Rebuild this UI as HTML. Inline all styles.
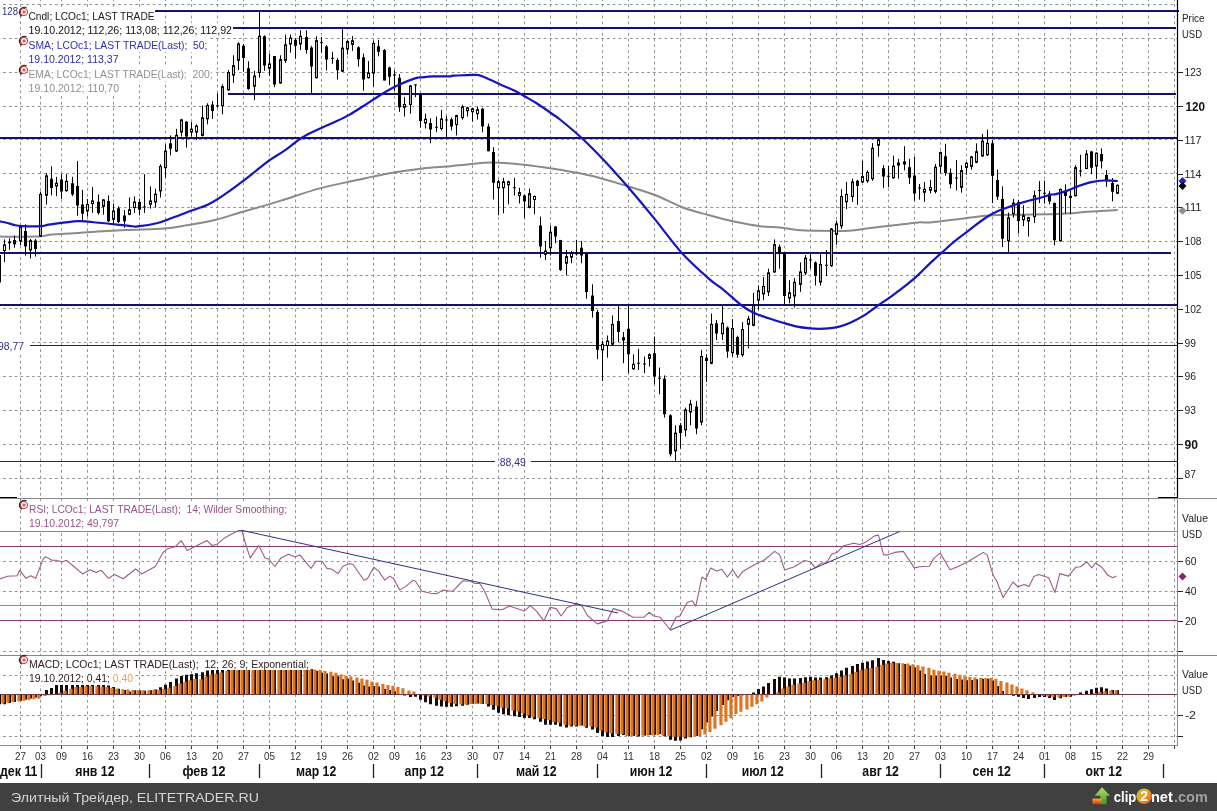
<!DOCTYPE html>
<html><head><meta charset="utf-8"><style>html,body{margin:0;padding:0;background:#fff;overflow:hidden}svg{display:block;will-change:transform}</style></head>
<body><svg width="1217" height="811" viewBox="0 0 1217 811"><rect width="1217" height="811" fill="#fff"/><path d="M20.5 0V745 M40.5 0V745 M61.5 0V745 M87.5 0V745 M113.5 0V745 M139.5 0V745 M165.5 0V745 M191.5 0V745 M217.5 0V745 M243.5 0V745 M269.5 0V745 M295.5 0V745 M321.5 0V745 M347.5 0V745 M373.5 0V745 M394.5 0V745 M420.5 0V745 M446.5 0V745 M472.5 0V745 M498.5 0V745 M524.5 0V745 M550.5 0V745 M576.5 0V745 M602.5 0V745 M628.5 0V745 M654.5 0V745 M680.5 0V745 M706.5 0V745 M732.5 0V745 M758.5 0V745 M784.5 0V745 M810.5 0V745 M836.5 0V745 M862.5 0V745 M888.5 0V745 M914.5 0V745 M940.5 0V745 M966.5 0V745 M992.5 0V745 M1018.5 0V745 M1044.5 0V745 M1070.5 0V745 M1096.5 0V745 M1122.5 0V745 M1148.5 0V745 M1174.5 0V745" stroke="#929292" stroke-width="1" stroke-dasharray="2.75 3" stroke-dashoffset="1.6" fill="none"/>
<path d="M0 4.5H1177 M0 38.5H1177 M0 72.5H1177 M0 106.5H1177 M0 139.5H1177 M0 173.5H1177 M0 207.5H1177 M0 241.5H1177 M0 275.5H1177 M0 308.5H1177 M0 342.5H1177 M0 376.5H1177 M0 410.5H1177 M0 444.5H1177 M0 478.5H1177 M0 561.5H1177 M0 591.5H1177 M0 651.5H1177 M0 675.5H1177 M0 715.5H1177 M0 736.5H1177" stroke="#929292" stroke-width="1" stroke-dasharray="2.75 3" stroke-dashoffset="2.55" fill="none"/>
<path d="M155 11H1179 M233 28H1176 M228 94H1176 M0 138H1177 M0 253H1171 M0 305H1177" stroke="#12126e" stroke-width="2" fill="none"/>
<path d="M30 345.5H1177 M0 461.5H495 M531 461.5H1177" stroke="#202070" stroke-width="1" fill="none"/>
<path d="M-2.0 236.6 C4.5 236.6 28.0 236.9 37.0 236.6 C46.0 236.2 45.6 235.1 51.8 234.5 C58.0 233.9 66.3 233.7 74.0 233.2 C81.7 232.7 88.8 231.9 98.0 231.4 C107.2 230.9 118.4 230.4 129.4 229.9 C140.5 229.4 154.8 229.3 164.3 228.5 C173.8 227.7 178.1 226.7 186.5 225.3 C194.9 223.9 206.1 222.1 215.0 220.0 C223.9 217.9 230.9 215.2 240.0 212.5 C249.1 209.8 262.2 206.3 269.6 204.1 C277.0 201.9 276.3 202.1 284.5 199.5 C292.7 196.9 307.5 191.7 319.0 188.6 C330.5 185.5 342.0 183.3 353.5 180.8 C365.0 178.3 376.5 175.6 388.0 173.5 C399.5 171.4 412.3 169.6 422.6 168.4 C432.9 167.2 442.6 167.0 450.0 166.3 C457.4 165.6 460.2 165.0 467.1 164.4 C474.0 163.8 482.4 162.5 491.5 162.5 C500.6 162.5 511.9 163.5 521.4 164.4 C530.9 165.3 542.1 167.1 548.5 168.0 C554.9 168.9 552.6 168.5 560.0 169.8 C567.4 171.1 581.3 173.2 592.6 176.0 C603.9 178.8 617.4 183.1 627.8 186.3 C638.2 189.5 646.0 191.5 655.0 195.0 C664.0 198.5 673.1 203.8 682.1 207.2 C691.1 210.6 700.2 212.8 709.3 215.3 C718.3 217.8 727.9 220.3 736.4 222.1 C744.9 223.9 752.7 225.3 760.0 226.2 C767.3 227.1 773.8 227.0 780.0 227.6 C786.2 228.2 791.5 229.4 797.3 229.9 C803.0 230.4 805.9 230.6 814.5 230.7 C823.1 230.8 840.4 231.1 849.0 230.7 C857.6 230.3 859.1 229.4 866.3 228.5 C873.5 227.6 883.6 226.5 892.2 225.5 C900.8 224.5 911.8 222.9 918.1 222.4 C924.4 221.9 923.1 223.0 930.0 222.4 C936.9 221.8 949.7 220.2 959.6 219.0 C969.5 217.8 979.3 216.2 989.2 215.5 C999.1 214.8 1008.7 214.9 1018.8 214.7 C1028.9 214.5 1041.1 214.4 1050.0 214.2 C1058.9 214.0 1065.7 213.7 1072.0 213.3 C1078.3 212.9 1080.4 212.2 1088.0 211.7 C1095.6 211.2 1112.8 210.4 1117.7 210.1" stroke="#8a8a8a" stroke-width="2" fill="none"/>
<path d="M-0.5 250.0V288.0 M4.5 239.4V262.1 M9.5 238.3V249.9 M14.5 235.5V247.7 M20.5 224.9V245.2 M25.5 224.4V255.5 M30.5 239.0V258.5 M35.5 239.0V256.5 M40.5 191.6V236.9 M46.5 173.1V204.5 M51.5 166.3V195.3 M56.5 176.8V196.2 M61.5 174.0V199.0 M66.5 174.0V191.6 M72.5 176.8V196.2 M77.5 161.1V215.6 M82.5 189.8V221.2 M87.5 199.0V216.6 M92.5 187.0V212.9 M98.5 194.4V214.7 M103.5 199.0V214.7 M108.5 195.3V222.1 M113.5 203.6V224.0 M118.5 206.4V223.0 M124.5 210.1V227.7 M129.5 197.5V215.3 M134.5 196.4V213.0 M139.5 198.6V215.3 M144.5 174.2V213.0 M150.5 186.4V208.6 M155.5 188.7V207.5 M160.5 164.3V197.5 M165.5 144.3V177.6 M170.5 135.4V155.4 M176.5 128.8V152.1 M181.5 118.8V136.5 M186.5 121.0V147.6 M191.5 122.1V136.5 M196.5 124.3V139.9 M202.5 105.5V136.5 M207.5 103.3V124.3 M212.5 101.0V118.8 M217.5 93.3V107.7 M222.5 84.4V114.3 M228.5 69.9V90.7 M233.5 55.3V82.9 M238.5 42.3V70.0 M243.5 44.0V71.7 M248.5 61.3V89.8 M254.5 70.8V100.2 M259.5 11.2V77.7 M264.5 35.4V70.8 M269.5 53.5V76.0 M274.5 56.1V87.2 M280.5 55.3V83.8 M285.5 34.5V63.0 M290.5 34.5V52.7 M295.5 38.0V58.7 M300.5 30.2V50.1 M306.5 30.2V53.5 M311.5 45.8V94.1 M316.5 36.3V78.6 M321.5 37.1V52.7 M326.5 45.1V70.5 M332.5 51.8V63.8 M337.5 58.2V79.5 M342.5 26.8V72.1 M347.5 39.8V54.5 M352.5 36.1V50.9 M358.5 46.2V66.6 M363.5 53.6V90.6 M368.5 61.0V78.6 M373.5 40.7V86.9 M378.5 39.8V56.4 M384.5 49.0V80.4 M389.5 66.6V85.1 M394.5 70.3V90.6 M399.5 74.0V111.9 M404.5 97.1V116.5 M410.5 85.1V113.7 M415.5 84.1V97.1 M420.5 93.4V127.6 M425.5 113.7V128.5 M430.5 118.3V143.3 M436.5 116.5V132.2 M441.5 109.8V130.4 M446.5 116.0V137.5 M451.5 117.6V130.4 M456.5 114.7V135.4 M462.5 104.8V119.6 M467.5 106.8V116.6 M472.5 107.8V121.6 M477.5 106.8V119.6 M482.5 107.8V132.4 M488.5 123.5V151.2 M493.5 147.2V199.5 M498.5 179.8V215.3 M503.5 177.8V213.3 M508.5 180.7V204.4 M514.5 177.8V195.5 M519.5 187.7V203.4 M524.5 194.6V218.2 M529.5 188.6V208.4 M534.5 195.5V214.3 M540.5 216.6V257.7 M545.5 241.0V259.9 M550.5 225.5V255.5 M555.5 226.2V243.3 M560.5 239.9V271.0 M566.5 249.9V275.4 M571.5 251.0V263.2 M576.5 239.9V255.5 M581.5 241.0V263.2 M586.5 253.2V298.7 M592.5 284.3V317.6 M597.5 309.9V359.2 M602.5 341.0V381.0 M607.5 335.5V357.7 M612.5 315.5V345.5 M618.5 304.4V342.1 M623.5 332.1V363.2 M628.5 305.5V373.2 M633.5 354.3V369.9 M638.5 348.8V369.9 M644.5 356.5V373.2 M649.5 353.2V366.5 M654.5 336.6V384.3 M659.5 367.6V394.3 M664.5 375.4V417.5 M670.5 414.2V456.4 M675.5 425.3V460.8 M680.5 423.1V448.6 M685.5 407.6V436.4 M690.5 399.8V425.3 M696.5 400.9V434.2 M701.5 349.9V425.3 M706.5 354.3V382.0 M711.5 313.5V364.3 M716.5 320.0V340.0 M722.5 305.4V340.0 M727.5 326.4V357.8 M732.5 319.0V356.8 M737.5 335.8V357.8 M742.5 322.2V356.8 M748.5 315.9V348.4 M753.5 292.8V326.4 M758.5 285.5V309.6 M763.5 277.1V300.2 M768.5 268.7V296.0 M774.5 239.4V272.9 M779.5 244.6V268.7 M784.5 251.9V304.4 M789.5 280.2V303.3 M794.5 278.1V307.5 M800.5 262.4V291.8 M805.5 255.1V275.0 M810.5 253.0V268.7 M815.5 261.4V285.5 M820.5 254.0V285.5 M826.5 250.0V276.1 M831.5 228.0V266.8 M836.5 220.6V244.8 M841.5 189.2V229.0 M846.5 181.9V209.1 M852.5 178.7V201.8 M857.5 179.8V204.9 M862.5 160.9V182.9 M867.5 170.3V182.9 M872.5 143.1V180.8 M878.5 137.8V156.7 M883.5 165.1V188.1 M888.5 166.1V187.1 M893.5 155.6V178.7 M898.5 158.8V178.7 M904.5 146.2V170.3 M909.5 158.8V184.0 M914.5 156.7V200.7 M919.5 184.0V199.7 M924.5 181.9V201.8 M930.5 179.8V193.4 M935.5 164.0V193.4 M940.5 151.5V173.5 M945.5 143.7V175.7 M950.5 168.5V188.4 M956.5 160.1V190.5 M961.5 165.3V192.6 M966.5 162.2V174.8 M971.5 155.9V169.5 M976.5 143.3V163.2 M982.5 133.9V156.9 M987.5 129.7V155.9 M992.5 140.2V203.1 M997.5 169.5V199.9 M1002.5 186.3V247.1 M1008.5 212.5V252.3 M1013.5 198.9V217.7 M1018.5 199.9V233.5 M1023.5 205.2V226.1 M1028.5 216.7V236.6 M1034.5 190.5V223.0 M1039.5 181.0V203.1 M1044.5 180.5V203.7 M1049.5 191.0V204.3 M1054.5 202.5V245.2 M1060.5 188.5V241.6 M1065.5 184.3V213.4 M1070.5 190.9V214.1 M1075.5 165.3V196.5 M1080.5 154.8V176.5 M1086.5 150.0V169.3 M1091.5 150.8V174.1 M1096.5 152.4V178.9 M1101.5 148.4V168.5 M1106.5 170.1V186.9 M1112.5 178.1V201.3 M1117.5 184.5V194.1" stroke="#000" stroke-width="1" fill="none"/>
<path d="M-2 254.9h3v27.7h-3z M8 241.6h3v1.7h-3z M13 240.0h3v4.3h-3z M24 231.0h3v15.4h-3z M34 240.6h3v8.3h-3z M50 178.7h3v9.2h-3z M60 179.6h3v12.0h-3z M71 183.3h3v11.1h-3z M76 186.0h3v19.5h-3z M81 204.5h3v9.3h-3z M97 201.8h3v11.1h-3z M107 200.9h3v20.3h-3z M117 208.2h3v13.9h-3z M123 215.6h3v5.6h-3z M138 202.0h3v7.7h-3z M143 206.4h3v1h-3z M169 143.2h3v5.5h-3z M185 121.7h3v14.8h-3z M211 104.4h3v6.6h-3z M216 105.2h3v1h-3z M242 45.8h3v12.1h-3z M247 68.2h3v20.7h-3z M263 36.3h3v29.3h-3z M273 56.1h3v28.5h-3z M294 39.7h3v6.1h-3z M305 37.1h3v13.0h-3z M310 47.5h3v19.0h-3z M320 42.2h3v1h-3z M325 46.4h3v13.0h-3z M331 57.7h3v1h-3z M336 60.1h3v10.2h-3z M357 47.2h3v12.0h-3z M362 57.3h3v22.2h-3z M377 46.2h3v5.6h-3z M383 49.9h3v30.5h-3z M388 67.5h3v9.2h-3z M393 74.4h3v1h-3z M398 77.7h3v29.5h-3z M414 84.6h3v1h-3z M419 94.3h3v26.8h-3z M429 123.0h3v6.4h-3z M435 126.7h3v1h-3z M445 119.5h3v1h-3z M450 119.2h3v7.3h-3z M481 108.7h3v17.8h-3z M487 126.5h3v24.7h-3z M492 152.1h3v30.6h-3z M513 187.2h3v1h-3z M523 195.5h3v6.0h-3z M539 225.5h3v21.1h-3z M554 226.6h3v10.0h-3z M559 239.9h3v30.0h-3z M575 252.1h3v2.2h-3z M580 247.7h3v7.8h-3z M585 253.2h3v38.9h-3z M591 295.4h3v15.5h-3z M596 312.1h3v37.7h-3z M617 321.0h3v11.1h-3z M627 328.8h3v25.5h-3z M637 362.7h3v1h-3z M643 363.4h3v1h-3z M653 353.2h3v23.3h-3z M658 377.8h3v1h-3z M663 378.7h3v35.5h-3z M669 415.3h3v38.9h-3z M679 425.3h3v7.8h-3z M695 406.5h3v22.1h-3z M705 357.7h3v3.3h-3z M715 323.3h3v10.2h-3z M726 327.4h3v24.1h-3z M736 336.9h3v17.8h-3z M778 246.7h3v7.3h-3z M783 253.0h3v43.0h-3z M809 259.4h3v1h-3z M814 262.4h3v13.7h-3z M825 264.8h3v1h-3z M856 180.8h3v5.2h-3z M882 168.2h3v8.4h-3z M887 175.7h3v1h-3z M908 167.2h3v10.5h-3z M913 175.6h3v17.8h-3z M918 187.6h3v1h-3z M944 156.3h3v16.7h-3z M949 172.7h3v11.5h-3z M955 177.4h3v1h-3z M991 143.3h3v32.5h-3z M996 180.0h3v16.8h-3z M1001 198.9h3v39.8h-3z M1017 202.0h3v18.9h-3z M1038 190.0h3v1h-3z M1043 192.8h3v1h-3z M1048 193.4h3v8.1h-3z M1053 203.0h3v37.3h-3z M1064 191.2h3v4.9h-3z M1069 195.7h3v2.4h-3z M1079 170.4h3v1h-3z M1090 151.6h3v16.1h-3z M1100 154.0h3v7.3h-3z M1105 174.9h3v6.4h-3z M1111 182.9h3v8.8h-3z" fill="#000"/>
<g fill="#fff" stroke="#000" stroke-width="1"><rect x="3.5" y="244.9" width="2" height="5.6" fill="#fff"/><rect x="19.5" y="227.0" width="2" height="14.0" fill="#b4b4b4"/><rect x="29.5" y="240.6" width="2" height="9.4" fill="#d4d4d4"/><rect x="39.5" y="194.4" width="2" height="41.6" fill="#b4b4b4"/><rect x="45.5" y="175.9" width="2" height="19.4" fill="#b4b4b4"/><rect x="55.5" y="183.3" width="2" height="2.7" fill="#fff"/><rect x="65.5" y="181.4" width="2" height="9.3" fill="#d4d4d4"/><rect x="86.5" y="204.5" width="2" height="6.5" fill="#d4d4d4"/><rect x="91.5" y="200.9" width="2" height="2.7" fill="#fff"/><rect x="102.5" y="199.9" width="2" height="6.5" fill="#d4d4d4"/><rect x="112.5" y="211.0" width="2" height="8.3" fill="#d4d4d4"/><rect x="128.5" y="209.7" width="2" height="4.5" fill="#fff"/><rect x="133.5" y="202.0" width="2" height="5.5" fill="#fff"/><rect x="149.5" y="200.9" width="2" height="3.3" fill="#fff"/><rect x="154.5" y="194.2" width="2" height="7.8" fill="#d4d4d4"/><rect x="159.5" y="166.5" width="2" height="24.4" fill="#b4b4b4"/><rect x="164.5" y="151.0" width="2" height="16.6" fill="#b4b4b4"/><rect x="175.5" y="135.4" width="2" height="15.6" fill="#b4b4b4"/><rect x="180.5" y="119.9" width="2" height="12.2" fill="#b4b4b4"/><rect x="190.5" y="129.2" width="2" height="2.9" fill="#fff"/><rect x="195.5" y="126.1" width="2" height="6.0" fill="#fff"/><rect x="201.5" y="117.7" width="2" height="17.7" fill="#b4b4b4"/><rect x="206.5" y="105.5" width="2" height="13.3" fill="#b4b4b4"/><rect x="221.5" y="86.6" width="2" height="18.9" fill="#b4b4b4"/><rect x="227.5" y="72.5" width="2" height="17.3" fill="#b4b4b4"/><rect x="232.5" y="65.6" width="2" height="9.5" fill="#d4d4d4"/><rect x="237.5" y="44.0" width="2" height="16.4" fill="#b4b4b4"/><rect x="253.5" y="76.0" width="2" height="10.4" fill="#d4d4d4"/><rect x="258.5" y="36.3" width="2" height="36.2" fill="#b4b4b4"/><rect x="268.5" y="63.9" width="2" height="4.3" fill="#fff"/><rect x="279.5" y="59.6" width="2" height="23.3" fill="#b4b4b4"/><rect x="284.5" y="44.9" width="2" height="15.5" fill="#b4b4b4"/><rect x="289.5" y="38.0" width="2" height="6.0" fill="#fff"/><rect x="299.5" y="36.3" width="2" height="7.7" fill="#d4d4d4"/><rect x="315.5" y="40.6" width="2" height="37.1" fill="#b4b4b4"/><rect x="341.5" y="48.1" width="2" height="23.1" fill="#b4b4b4"/><rect x="346.5" y="41.6" width="2" height="7.4" fill="#d4d4d4"/><rect x="351.5" y="40.7" width="2" height="3.7" fill="#fff"/><rect x="367.5" y="73.0" width="2" height="4.7" fill="#fff"/><rect x="372.5" y="43.5" width="2" height="29.5" fill="#b4b4b4"/><rect x="403.5" y="104.5" width="2" height="2.7" fill="#fff"/><rect x="409.5" y="86.0" width="2" height="18.5" fill="#b4b4b4"/><rect x="424.5" y="119.3" width="2" height="3.7" fill="#fff"/><rect x="440.5" y="119.0" width="2" height="9.5" fill="#d4d4d4"/><rect x="455.5" y="115.6" width="2" height="8.9" fill="#d4d4d4"/><rect x="461.5" y="106.8" width="2" height="10.8" fill="#d4d4d4"/><rect x="466.5" y="107.8" width="2" height="2.9" fill="#fff"/><rect x="471.5" y="108.7" width="2" height="3.0" fill="#fff"/><rect x="476.5" y="109.7" width="2" height="4.0" fill="#fff"/><rect x="497.5" y="181.7" width="2" height="6.0" fill="#fff"/><rect x="502.5" y="181.7" width="2" height="6.0" fill="#fff"/><rect x="507.5" y="181.7" width="2" height="3.0" fill="#fff"/><rect x="518.5" y="192.6" width="2" height="2.9" fill="#fff"/><rect x="528.5" y="193.6" width="2" height="13.8" fill="#b4b4b4"/><rect x="533.5" y="196.5" width="2" height="3.0" fill="#fff"/><rect x="544.5" y="251.0" width="2" height="3.3" fill="#fff"/><rect x="549.5" y="232.2" width="2" height="15.5" fill="#b4b4b4"/><rect x="565.5" y="256.6" width="2" height="6.6" fill="#d4d4d4"/><rect x="570.5" y="253.2" width="2" height="4.0" fill="#fff"/><rect x="601.5" y="344.3" width="2" height="5.6" fill="#fff"/><rect x="606.5" y="341.0" width="2" height="4.5" fill="#fff"/><rect x="611.5" y="324.4" width="2" height="19.9" fill="#b4b4b4"/><rect x="622.5" y="337.7" width="2" height="2.2" fill="#fff"/><rect x="632.5" y="364.3" width="2" height="4.4" fill="#fff"/><rect x="648.5" y="354.8" width="2" height="3.5" fill="#fff"/><rect x="674.5" y="433.1" width="2" height="17.7" fill="#b4b4b4"/><rect x="684.5" y="409.8" width="2" height="20.0" fill="#b4b4b4"/><rect x="689.5" y="404.2" width="2" height="7.8" fill="#d4d4d4"/><rect x="700.5" y="356.5" width="2" height="65.5" fill="#b4b4b4"/><rect x="710.5" y="324.4" width="2" height="38.8" fill="#b4b4b4"/><rect x="721.5" y="323.2" width="2" height="10.5" fill="#d4d4d4"/><rect x="731.5" y="328.5" width="2" height="24.1" fill="#b4b4b4"/><rect x="741.5" y="329.5" width="2" height="25.2" fill="#b4b4b4"/><rect x="747.5" y="319.0" width="2" height="5.3" fill="#fff"/><rect x="752.5" y="305.4" width="2" height="19.9" fill="#b4b4b4"/><rect x="757.5" y="290.7" width="2" height="9.5" fill="#d4d4d4"/><rect x="762.5" y="286.5" width="2" height="7.4" fill="#d4d4d4"/><rect x="767.5" y="272.9" width="2" height="18.9" fill="#b4b4b4"/><rect x="773.5" y="244.6" width="2" height="27.3" fill="#b4b4b4"/><rect x="788.5" y="292.8" width="2" height="5.3" fill="#fff"/><rect x="793.5" y="282.3" width="2" height="13.7" fill="#b4b4b4"/><rect x="799.5" y="271.9" width="2" height="12.5" fill="#b4b4b4"/><rect x="804.5" y="258.2" width="2" height="14.7" fill="#b4b4b4"/><rect x="819.5" y="264.5" width="2" height="17.5" fill="#b4b4b4"/><rect x="830.5" y="229.0" width="2" height="36.7" fill="#b4b4b4"/><rect x="835.5" y="223.8" width="2" height="10.5" fill="#d4d4d4"/><rect x="840.5" y="196.5" width="2" height="29.4" fill="#b4b4b4"/><rect x="845.5" y="194.4" width="2" height="7.4" fill="#d4d4d4"/><rect x="851.5" y="181.9" width="2" height="14.6" fill="#b4b4b4"/><rect x="861.5" y="176.6" width="2" height="5.3" fill="#fff"/><rect x="866.5" y="172.4" width="2" height="8.4" fill="#d4d4d4"/><rect x="871.5" y="148.3" width="2" height="30.4" fill="#b4b4b4"/><rect x="877.5" y="139.9" width="2" height="5.3" fill="#fff"/><rect x="892.5" y="166.1" width="2" height="11.6" fill="#d4d4d4"/><rect x="897.5" y="163.0" width="2" height="2.1" fill="#fff"/><rect x="903.5" y="161.9" width="2" height="2.1" fill="#fff"/><rect x="923.5" y="189.2" width="2" height="3.1" fill="#fff"/><rect x="929.5" y="187.5" width="2" height="2.7" fill="#fff"/><rect x="934.5" y="167.2" width="2" height="24.1" fill="#b4b4b4"/><rect x="939.5" y="152.6" width="2" height="13.6" fill="#b4b4b4"/><rect x="960.5" y="170.6" width="2" height="16.7" fill="#b4b4b4"/><rect x="965.5" y="163.2" width="2" height="4.2" fill="#fff"/><rect x="970.5" y="156.9" width="2" height="9.5" fill="#d4d4d4"/><rect x="975.5" y="151.7" width="2" height="10.5" fill="#d4d4d4"/><rect x="981.5" y="141.2" width="2" height="14.7" fill="#b4b4b4"/><rect x="986.5" y="143.3" width="2" height="11.5" fill="#d4d4d4"/><rect x="1007.5" y="217.7" width="2" height="23.1" fill="#b4b4b4"/><rect x="1012.5" y="203.1" width="2" height="10.5" fill="#d4d4d4"/><rect x="1022.5" y="215.6" width="2" height="4.2" fill="#fff"/><rect x="1027.5" y="217.7" width="2" height="3.2" fill="#fff"/><rect x="1033.5" y="195.7" width="2" height="21.0" fill="#b4b4b4"/><rect x="1059.5" y="189.4" width="2" height="51.3" fill="#b4b4b4"/><rect x="1074.5" y="167.7" width="2" height="28.0" fill="#b4b4b4"/><rect x="1085.5" y="154.0" width="2" height="14.5" fill="#b4b4b4"/><rect x="1095.5" y="153.2" width="2" height="12.9" fill="#b4b4b4"/><rect x="1116.5" y="185.3" width="2" height="8.0" fill="#d4d4d4"/></g>
<path d="M-2.0 221.1 C-0.6 221.4 4.0 222.0 6.7 222.7 C9.4 223.3 11.8 224.4 14.4 225.0 C17.0 225.6 17.8 225.9 22.2 226.1 C26.6 226.3 36.4 226.4 41.0 226.1 C45.6 225.8 43.9 225.2 50.0 224.4 C56.1 223.6 70.7 221.6 77.7 221.2 C84.7 220.8 86.5 221.5 92.0 222.0 C97.5 222.5 104.8 223.4 111.0 224.0 C117.2 224.6 125.0 225.4 129.4 225.8 C133.8 226.2 133.0 226.9 137.7 226.4 C142.4 225.9 151.8 224.5 157.7 223.0 C163.6 221.5 167.6 219.5 173.2 217.5 C178.8 215.5 185.1 213.0 191.0 210.8 C196.9 208.6 202.8 207.1 208.7 204.2 C214.6 201.2 219.6 197.9 226.5 193.1 C233.4 188.3 243.2 180.8 250.0 175.6 C256.8 170.4 261.6 166.0 267.3 161.8 C273.1 157.6 278.8 154.6 284.5 150.6 C290.2 146.6 296.1 141.3 301.8 137.7 C307.6 134.1 313.2 131.7 319.0 129.0 C324.8 126.3 331.1 123.7 336.3 121.3 C341.5 118.9 345.5 117.0 350.1 114.4 C354.7 111.8 358.7 109.0 363.9 105.7 C369.1 102.4 375.4 98.0 381.1 94.5 C386.9 91.0 392.6 87.7 398.4 85.0 C404.2 82.3 411.7 79.4 415.7 78.1 C419.7 76.8 419.7 77.6 422.6 77.3 C425.5 77.0 428.3 76.6 432.9 76.4 C437.5 76.2 446.6 76.4 450.0 76.3 C453.4 76.2 449.4 75.9 453.6 75.7 C457.8 75.5 470.3 74.7 475.3 74.9 C480.3 75.1 478.9 75.0 483.4 76.8 C487.9 78.6 497.5 83.3 502.4 85.5 C507.3 87.7 509.2 88.2 513.0 90.0 C516.8 91.8 521.0 94.2 525.0 96.5 C529.0 98.8 532.3 100.5 537.0 103.5 C541.7 106.5 549.2 111.8 553.0 114.5 C556.8 117.2 555.2 115.6 560.0 119.5 C564.8 123.4 574.5 131.3 581.7 138.0 C588.9 144.7 595.7 151.6 603.4 159.7 C611.1 167.8 619.2 176.9 627.8 186.8 C636.4 196.8 646.0 208.3 655.0 219.4 C664.0 230.5 673.1 243.4 682.1 253.3 C691.1 263.2 703.0 273.5 709.3 279.1 C715.6 284.7 716.4 284.3 720.0 287.1 C723.6 289.9 727.2 293.0 730.8 296.1 C734.4 299.2 738.1 302.8 741.7 305.5 C745.3 308.2 748.3 310.1 752.5 312.2 C756.7 314.2 762.2 316.1 767.0 317.8 C771.8 319.5 776.7 320.9 781.5 322.3 C786.3 323.7 791.1 325.3 795.9 326.3 C800.7 327.3 806.5 328.0 810.4 328.4 C814.2 328.8 816.0 328.8 819.0 328.8 C822.0 328.8 825.1 328.8 828.5 328.4 C831.9 328.0 835.7 327.5 839.3 326.6 C842.9 325.7 846.0 324.7 850.2 322.8 C854.4 320.9 860.1 317.9 864.6 315.1 C869.1 312.3 872.8 309.2 877.3 306.0 C881.8 302.8 886.9 299.6 891.7 296.1 C896.5 292.6 901.7 288.8 906.2 285.2 C910.7 281.6 914.9 278.0 918.8 274.4 C922.7 270.8 925.9 267.2 929.7 263.6 C933.5 260.0 937.6 256.3 941.8 252.6 C946.0 248.9 950.1 245.0 954.7 241.2 C959.3 237.4 964.4 233.8 969.5 229.9 C974.6 226.0 980.4 221.2 985.3 218.0 C990.2 214.8 994.3 212.7 999.1 210.6 C1003.9 208.5 1009.0 206.8 1013.9 205.2 C1018.8 203.5 1024.6 201.8 1028.7 200.7 C1032.8 199.5 1035.0 199.3 1038.6 198.3 C1042.1 197.3 1047.1 195.5 1050.0 194.8 C1052.9 194.1 1052.9 194.9 1056.0 194.1 C1059.1 193.3 1065.0 191.4 1068.8 190.1 C1072.5 188.8 1074.8 187.4 1078.5 186.1 C1082.2 184.8 1087.0 183.0 1091.3 182.1 C1095.6 181.2 1099.7 180.7 1104.1 180.5 C1108.5 180.3 1115.4 180.9 1117.7 181.0" stroke="#1414c0" stroke-width="2.2" fill="none"/>
<path d="M0 498.5H1217 M0 655.5H1217" stroke="#86868c" stroke-width="1" fill="none"/>
<path d="M1177.5 0V497.5 M1158 497.5H1178 M0 497.5H17" stroke="#000" stroke-width="1.2" fill="none"/>
<path d="M1177.5 498V746 M0 745.5H1177.5" stroke="#8c8c94" stroke-width="1" fill="none"/>
<path d="M1178 478.5H1183 M1178 444.5H1183 M1178 410.5H1183 M1178 376.5H1183 M1178 343.5H1183 M1178 309.5H1183 M1178 275.5H1183 M1178 241.5H1183 M1178 207.5H1183 M1178 174.5H1183 M1178 140.5H1183 M1178 106.5H1183 M1178 72.5H1183 M1178 561.5H1183 M1178 591.5H1183 M1178 621.5H1183 M1178 651.5H1183 M1178 715.5H1183 M1178 736.5H1183" stroke="#222" stroke-width="1" fill="none"/>
<path d="M0 531.5H1177 M0 605.5H1177" stroke="#b07898" stroke-width="1.2" fill="none"/>
<path d="M0 546.5H1177 M0 620.5H1177" stroke="#8a3a6c" stroke-width="1.1" fill="none"/>
<polyline points="-2.0,579.5 7.4,576.3 17.3,575.8 19.7,570.2 25.9,578.3 30.8,575.8 35.7,578.3 43.1,559.1 45.6,556.6 51.8,560.3 56.7,560.3 61.6,562.0 66.6,560.3 73.9,566.5 82.6,573.9 90.0,569.7 96.1,572.6 101.1,570.2 108.5,578.3 114.6,574.4 123.2,578.8 135.6,569.0 141.7,573.9 155.3,566.5 162.7,552.9 167.6,548.7 175.0,546.8 181.2,540.6 187.3,550.5 194.7,546.8 207.0,540.6 212.0,545.5 216.9,544.3 224.3,538.1 231.7,533.9 237.9,530.7 241.6,529.5 245.3,543.0 250.2,557.9 258.8,545.5 265.0,557.9 268.7,559.1 274.8,566.5 281.0,557.9 288.4,554.2 294.9,556.8 299.9,554.9 311.0,568.4 315.9,561.3 322.0,561.3 327.0,568.4 331.9,569.2 338.1,573.6 343.0,566.2 349.2,563.7 352.9,564.2 363.9,580.2 367.6,578.5 373.8,567.2 378.7,571.1 384.9,580.2 389.8,576.1 393.5,578.5 399.7,590.1 405.8,586.4 413.2,580.2 415.7,581.5 421.9,591.3 430.5,593.3 436.7,593.8 442.8,590.1 447.8,590.8 452.7,591.3 462.5,581.0 469.9,581.0 474.9,583.5 479.8,583.5 484.7,591.3 492.1,609.1 502.0,609.8 509.4,606.1 516.8,608.6 524.2,611.1 530.3,605.6 536.5,611.1 543.9,620.9 550.0,607.4 556.2,608.6 561.1,616.0 567.3,607.4 577.2,603.7 582.1,606.1 587.4,615.5 597.3,623.9 607.1,620.9 613.3,608.6 621.9,611.1 633.0,617.2 644.1,617.2 649.0,612.3 653.9,616.0 660.1,617.2 670.0,629.5 676.1,617.2 679.8,616.0 687.2,602.4 692.2,600.7 695.8,606.1 702.0,577.0 705.7,579.5 710.6,567.9 716.8,571.1 721.7,569.2 727.4,577.0 732.8,569.7 737.8,577.8 742.7,571.6 757.5,563.0 763.6,560.5 774.7,551.4 779.7,554.9 784.6,569.9 794.4,566.7 804.3,560.5 810.5,561.8 815.4,567.9 821.6,563.0 826.5,563.0 831.4,554.4 837.6,551.9 843.7,545.7 853.6,543.3 859.8,544.5 865.9,542.0 874.6,535.9 878.4,535.1 883.6,554.9 887.3,554.9 894.6,552.4 903.3,551.4 914.4,567.9 919.3,566.7 929.2,566.2 934.1,558.1 940.2,553.1 950.1,569.7 958.7,566.2 968.6,561.3 976.0,556.8 983.4,552.4 987.1,554.9 993.2,575.3 996.9,581.5 1003.1,597.5 1013.0,582.0 1017.9,586.9 1024.1,584.4 1029.0,586.4 1033.9,576.6 1038.8,574.6 1048.7,577.8 1054.9,592.6 1059.8,573.6 1068.4,576.1 1075.8,567.2 1080.7,566.7 1086.9,561.8 1091.8,567.9 1095.5,563.0 1101.7,567.2 1107.9,575.3 1112.8,577.8 1116.5,576.1" stroke="#9c5a8c" stroke-width="1.1" fill="none" stroke-linejoin="round"/>
<path d="M238 529.5L618 613 M670 630.3L900 531.4" stroke="#303088" stroke-width="1" fill="none"/>
<path d="M-2 695.0h3v9.3h-3z M3 695.0h3v9.2h-3z M8 695.0h3v8.0h-3z M13 695.0h3v6.9h-3z M19 695.0h3v5.8h-3z M24 695.0h3v4.6h-3z M29 695.0h3v3.5h-3z M34 695.0h3v2.4h-3z M39 695.0h3v1.3h-3z M45 689.9h3v5.1h-3z M50 688.0h3v7.0h-3z M55 682.9h3v12.1h-3z M60 681.2h3v13.8h-3z M65 679.7h3v15.3h-3z M71 678.8h3v16.2h-3z M76 678.0h3v17.0h-3z M81 678.0h3v17.0h-3z M86 678.8h3v16.2h-3z M91 679.7h3v15.3h-3z M97 681.5h3v13.5h-3z M102 683.8h3v11.2h-3z M107 685.5h3v9.5h-3z M112 687.0h3v8.0h-3z M117 688.7h3v6.3h-3z M123 689.9h3v5.1h-3z M128 691.4h3v3.6h-3z M133 690.3h3v4.7h-3z M138 690.4h3v4.6h-3z M143 690.8h3v4.2h-3z M149 690.3h3v4.7h-3z M154 689.4h3v5.6h-3z M159 687.2h3v7.8h-3z M164 684.7h3v10.3h-3z M169 682.0h3v13.0h-3z M175 678.6h3v16.4h-3z M180 676.1h3v18.9h-3z M185 674.7h3v20.3h-3z M190 674.3h3v20.7h-3z M195 673.3h3v21.7h-3z M201 672.2h3v22.8h-3z M206 670.5h3v24.5h-3z M211 668.6h3v26.4h-3z M216 667.1h3v27.9h-3z M221 665.1h3v29.9h-3z M227 664.2h3v30.8h-3z M232 663.7h3v31.3h-3z M237 663.2h3v31.8h-3z M242 662.9h3v32.1h-3z M247 662.7h3v32.3h-3z M253 662.4h3v32.6h-3z M258 662.3h3v32.7h-3z M263 662.3h3v32.7h-3z M268 662.3h3v32.7h-3z M273 662.3h3v32.7h-3z M279 662.5h3v32.5h-3z M284 662.8h3v32.2h-3z M289 663.0h3v32.0h-3z M294 663.5h3v31.5h-3z M299 664.5h3v30.5h-3z M305 666.5h3v28.5h-3z M310 669.3h3v25.7h-3z M315 670.9h3v24.1h-3z M320 672.7h3v22.3h-3z M325 673.5h3v21.5h-3z M331 676.3h3v18.7h-3z M336 676.3h3v18.7h-3z M341 679.2h3v15.8h-3z M346 678.7h3v16.3h-3z M351 680.5h3v14.5h-3z M357 682.8h3v12.2h-3z M362 685.5h3v9.5h-3z M367 686.6h3v8.4h-3z M372 685.9h3v9.1h-3z M377 686.6h3v8.4h-3z M383 689.0h3v6.0h-3z M388 689.9h3v5.1h-3z M393 691.2h3v3.8h-3z M398 694.6h3v0.4h-3z M403 695.0h3v0.6h-3z M409 695.0h3v2.1h-3z M414 695.0h3v1.7h-3z M419 695.0h3v4.8h-3z M424 695.0h3v7.3h-3z M429 695.0h3v9.3h-3z M435 695.0h3v10.8h-3z M440 695.0h3v11.4h-3z M445 695.0h3v11.7h-3z M450 695.0h3v11.7h-3z M455 695.0h3v11.2h-3z M461 695.0h3v10.7h-3z M466 695.0h3v9.8h-3z M471 695.0h3v8.8h-3z M476 695.0h3v8.6h-3z M481 695.0h3v9.1h-3z M487 695.0h3v11.4h-3z M492 695.0h3v14.8h-3z M497 695.0h3v17.7h-3z M502 695.0h3v19.3h-3z M507 695.0h3v20.2h-3z M513 695.0h3v21.2h-3z M518 695.0h3v22.1h-3z M523 695.0h3v23.0h-3z M528 695.0h3v23.0h-3z M533 695.0h3v24.2h-3z M539 695.0h3v26.8h-3z M544 695.0h3v29.7h-3z M549 695.0h3v29.7h-3z M554 695.0h3v29.8h-3z M559 695.0h3v31.6h-3z M565 695.0h3v32.4h-3z M570 695.0h3v31.5h-3z M575 695.0h3v31.5h-3z M580 695.0h3v30.6h-3z M585 695.0h3v32.7h-3z M591 695.0h3v34.4h-3z M596 695.0h3v37.9h-3z M601 695.0h3v41.0h-3z M606 695.0h3v41.9h-3z M611 695.0h3v41.9h-3z M617 695.0h3v41.1h-3z M622 695.0h3v40.1h-3z M627 695.0h3v40.9h-3z M632 695.0h3v41.0h-3z M637 695.0h3v41.5h-3z M643 695.0h3v40.5h-3z M648 695.0h3v39.9h-3z M653 695.0h3v39.7h-3z M658 695.0h3v39.1h-3z M663 695.0h3v41.3h-3z M669 695.0h3v44.8h-3z M674 695.0h3v45.8h-3z M679 695.0h3v45.5h-3z M684 695.0h3v43.4h-3z M689 695.0h3v42.3h-3z M695 695.0h3v41.0h-3z M700 695.0h3v34.3h-3z M705 695.0h3v27.6h-3z M710 695.0h3v21.4h-3z M715 695.0h3v16.0h-3z M721 695.0h3v10.0h-3z M726 695.0h3v5.2h-3z M731 695.0h3v1.9h-3z M736 695.0h3v0.9h-3z M741 695.0h3v0.2h-3z M747 694.6h3v0.4h-3z M752 692.6h3v2.4h-3z M757 689.1h3v5.9h-3z M762 686.4h3v8.6h-3z M767 683.0h3v12.0h-3z M773 678.9h3v16.1h-3z M778 676.7h3v18.3h-3z M783 677.6h3v17.4h-3z M788 678.4h3v16.6h-3z M793 678.4h3v16.6h-3z M799 678.1h3v16.9h-3z M804 677.3h3v17.7h-3z M809 676.7h3v18.3h-3z M814 677.4h3v17.6h-3z M819 677.4h3v17.6h-3z M825 677.2h3v17.8h-3z M830 675.4h3v19.6h-3z M835 673.2h3v21.8h-3z M840 670.6h3v24.4h-3z M845 667.7h3v27.3h-3z M851 665.9h3v29.1h-3z M856 664.0h3v31.0h-3z M861 662.8h3v32.2h-3z M866 661.5h3v33.5h-3z M871 660.3h3v34.7h-3z M877 658.0h3v37.0h-3z M882 659.9h3v35.1h-3z M887 661.1h3v33.9h-3z M892 661.8h3v33.2h-3z M897 663.3h3v31.7h-3z M903 664.0h3v31.0h-3z M908 665.8h3v29.2h-3z M913 667.5h3v27.5h-3z M918 670.4h3v24.6h-3z M923 674.0h3v21.0h-3z M929 675.6h3v19.4h-3z M934 675.9h3v19.1h-3z M939 675.4h3v19.6h-3z M944 675.9h3v19.1h-3z M949 677.6h3v17.4h-3z M955 678.9h3v16.1h-3z M960 679.6h3v15.4h-3z M965 680.2h3v14.8h-3z M970 679.9h3v15.1h-3z M975 679.2h3v15.8h-3z M981 678.8h3v16.2h-3z M986 678.7h3v16.3h-3z M991 680.5h3v14.5h-3z M996 686.0h3v9.0h-3z M1001 691.1h3v3.9h-3z M1007 694.0h3v1.0h-3z M1012 695.0h3v0.7h-3z M1017 695.0h3v1.8h-3z M1022 695.0h3v2.9h-3z M1027 695.0h3v4.0h-3z M1033 695.0h3v3.0h-3z M1038 695.0h3v1.9h-3z M1043 695.0h3v2.1h-3z M1048 695.0h3v3.1h-3z M1053 695.0h3v4.9h-3z M1059 695.0h3v3.2h-3z M1064 695.0h3v1.9h-3z M1069 695.0h3v1.7h-3z M1074 694.9h3v0.1h-3z M1079 692.6h3v2.4h-3z M1085 690.8h3v4.2h-3z M1090 689.2h3v5.8h-3z M1095 687.8h3v7.2h-3z M1100 687.3h3v7.7h-3z M1105 688.6h3v6.4h-3z M1111 690.0h3v5.0h-3z M1116 690.2h3v4.8h-3z" fill="#1a0a08"/>
<path d="M-4 695.0h1v8.5h-1z M1 695.0h1v8.4h-1z M6 695.0h1v7.7h-1z M11 695.0h1v7.0h-1z M17 695.0h1v6.4h-1z M22 695.0h1v5.7h-1z M27 695.0h1v5.0h-1z M32 695.0h1v4.3h-1z M37 695.0h1v3.7h-1z M43 695.0h1v0.9h-1z M48 695.0h1v0.3h-1z M53 694.4h1v0.6h-1z M58 692.7h1v2.3h-1z M63 690.4h1v4.6h-1z M69 688.7h1v6.3h-1z M74 687.0h1v8.0h-1z M79 687.0h1v8.0h-1z M84 686.2h1v8.8h-1z M89 685.9h1v9.1h-1z M95 686.3h1v8.7h-1z M100 686.6h1v8.4h-1z M105 687.1h1v7.9h-1z M110 687.8h1v7.2h-1z M115 688.7h1v6.3h-1z M121 689.2h1v5.8h-1z M126 689.5h1v5.5h-1z M131 689.9h1v5.1h-1z M136 690.3h1v4.7h-1z M141 690.3h1v4.7h-1z M147 690.3h1v4.7h-1z M152 689.8h1v5.2h-1z M157 689.7h1v5.3h-1z M162 689.0h1v6.0h-1z M167 687.8h1v7.2h-1z M173 686.0h1v9.0h-1z M178 683.5h1v11.5h-1z M183 682.1h1v12.9h-1z M188 680.3h1v14.7h-1z M193 678.9h1v16.1h-1z M199 679.2h1v15.8h-1z M204 676.6h1v18.4h-1z M209 674.4h1v20.6h-1z M214 673.7h1v21.3h-1z M219 672.6h1v22.4h-1z M225 670.9h1v24.1h-1z M230 669.3h1v25.7h-1z M235 667.9h1v27.1h-1z M240 667.4h1v27.6h-1z M245 666.9h1v28.1h-1z M251 666.3h1v28.7h-1z M256 665.9h1v29.1h-1z M261 665.7h1v29.3h-1z M266 665.4h1v29.6h-1z M271 665.2h1v29.8h-1z M277 665.3h1v29.7h-1z M282 665.6h1v29.4h-1z M287 665.9h1v29.1h-1z M292 666.2h1v28.8h-1z M297 666.7h1v28.3h-1z M303 667.6h1v27.4h-1z M308 668.7h1v26.3h-1z M313 669.4h1v25.6h-1z M318 670.0h1v25.0h-1z M323 671.0h1v24.0h-1z M329 671.8h1v23.2h-1z M334 672.7h1v22.3h-1z M339 674.4h1v20.6h-1z M344 675.7h1v19.3h-1z M349 676.6h1v18.4h-1z M355 677.6h1v17.4h-1z M360 678.6h1v16.4h-1z M365 679.8h1v15.2h-1z M370 681.5h1v13.5h-1z M375 682.5h1v12.5h-1z M381 684.0h1v11.0h-1z M386 685.1h1v9.9h-1z M391 685.7h1v9.3h-1z M396 687.1h1v7.9h-1z M401 688.2h1v6.8h-1z M407 690.6h1v4.4h-1z M412 691.5h1v3.5h-1z M417 693.9h1v1.1h-1z M422 695.0h1v0.5h-1z M427 695.0h1v1.5h-1z M433 695.0h1v2.6h-1z M438 695.0h1v4.7h-1z M443 695.0h1v6.3h-1z M448 695.0h1v8.0h-1z M453 695.0h1v9.0h-1z M459 695.0h1v9.4h-1z M464 695.0h1v9.4h-1z M469 695.0h1v8.9h-1z M474 695.0h1v8.9h-1z M479 695.0h1v8.9h-1z M485 695.0h1v9.0h-1z M490 695.0h1v9.9h-1z M495 695.0h1v11.1h-1z M500 695.0h1v12.7h-1z M505 695.0h1v13.6h-1z M511 695.0h1v15.6h-1z M516 695.0h1v16.4h-1z M521 695.0h1v18.5h-1z M526 695.0h1v20.2h-1z M531 695.0h1v22.2h-1z M537 695.0h1v23.0h-1z M542 695.0h1v24.1h-1z M547 695.0h1v24.9h-1z M552 695.0h1v26.9h-1z M557 695.0h1v27.8h-1z M563 695.0h1v29.7h-1z M568 695.0h1v30.6h-1z M573 695.0h1v30.6h-1z M578 695.0h1v30.6h-1z M583 695.0h1v31.5h-1z M589 695.0h1v31.6h-1z M594 695.0h1v32.4h-1z M599 695.0h1v35.4h-1z M604 695.0h1v37.3h-1z M609 695.0h1v38.2h-1z M615 695.0h1v39.0h-1z M620 695.0h1v39.1h-1z M625 695.0h1v40.9h-1z M630 695.0h1v41.0h-1z M635 695.0h1v40.5h-1z M641 695.0h1v40.5h-1z M646 695.0h1v40.5h-1z M651 695.0h1v40.4h-1z M656 695.0h1v40.0h-1z M661 695.0h1v40.6h-1z M667 695.0h1v41.2h-1z M672 695.0h1v41.7h-1z M677 695.0h1v41.8h-1z M682 695.0h1v42.3h-1z M687 695.0h1v41.7h-1z M693 695.0h1v41.6h-1z M698 695.0h1v41.1h-1z M703 695.0h1v39.4h-1z M708 695.0h1v37.1h-1z M713 695.0h1v33.7h-1z M719 695.0h1v30.2h-1z M724 695.0h1v26.7h-1z M729 695.0h1v23.3h-1z M734 695.0h1v19.1h-1z M739 695.0h1v16.7h-1z M745 695.0h1v14.4h-1z M750 695.0h1v11.8h-1z M755 695.0h1v9.2h-1z M760 695.0h1v6.4h-1z M765 695.0h1v2.5h-1z M771 694.7h1v0.3h-1z M776 692.2h1v2.8h-1z M781 688.4h1v6.6h-1z M786 686.5h1v8.5h-1z M791 684.8h1v10.2h-1z M797 683.8h1v11.2h-1z M802 682.8h1v12.2h-1z M807 681.0h1v14.0h-1z M812 680.2h1v14.8h-1z M817 679.7h1v15.3h-1z M823 679.2h1v15.8h-1z M828 678.3h1v16.7h-1z M833 677.8h1v17.2h-1z M838 676.8h1v18.2h-1z M843 675.3h1v19.7h-1z M849 674.1h1v20.9h-1z M854 672.0h1v23.0h-1z M859 669.8h1v25.2h-1z M864 668.8h1v26.2h-1z M869 667.9h1v27.1h-1z M875 666.7h1v28.3h-1z M880 664.7h1v30.3h-1z M885 663.5h1v31.5h-1z M890 662.9h1v32.1h-1z M895 662.9h1v32.1h-1z M901 663.2h1v31.8h-1z M906 663.4h1v31.6h-1z M911 664.3h1v30.7h-1z M916 665.2h1v29.8h-1z M921 666.4h1v28.6h-1z M927 667.8h1v27.2h-1z M932 669.7h1v25.3h-1z M937 670.7h1v24.3h-1z M942 671.6h1v23.4h-1z M947 672.7h1v22.3h-1z M953 673.7h1v21.3h-1z M958 674.8h1v20.2h-1z M963 676.2h1v18.8h-1z M968 676.9h1v18.1h-1z M973 677.5h1v17.5h-1z M979 678.0h1v17.0h-1z M984 678.0h1v17.0h-1z M989 678.0h1v17.0h-1z M994 678.8h1v16.2h-1z M999 680.9h1v14.1h-1z M1005 682.6h1v12.4h-1z M1010 684.4h1v10.6h-1z M1015 686.4h1v8.6h-1z M1020 688.4h1v6.6h-1z M1025 690.2h1v4.8h-1z M1031 692.3h1v2.7h-1z M1036 694.5h1v0.5h-1z M1041 695.0h1v0.9h-1z M1046 695.0h1v1.4h-1z M1051 695.0h1v2.0h-1z M1057 695.0h1v2.4h-1z M1062 695.0h1v1.9h-1z M1067 695.0h1v1.5h-1z M1072 695.0h1v0.7h-1z M1077 695.0h1v0.0h-1z M1083 694.5h1v0.5h-1z M1088 693.9h1v1.1h-1z M1093 693.0h1v2.0h-1z M1098 692.1h1v2.9h-1z M1103 691.3h1v3.7h-1z M1109 690.6h1v4.4h-1z M1114 690.5h1v4.5h-1z" fill="#f2a45a"/>
<path d="M-3 695.0h2.5v8.5h-2.5z M2 695.0h2.5v8.4h-2.5z M7 695.0h2.5v7.7h-2.5z M12 695.0h2.5v7.0h-2.5z M18 695.0h2.5v6.4h-2.5z M23 695.0h2.5v5.7h-2.5z M28 695.0h2.5v5.0h-2.5z M33 695.0h2.5v4.3h-2.5z M38 695.0h2.5v3.7h-2.5z M44 695.0h2.5v0.9h-2.5z M49 695.0h2.5v0.3h-2.5z M54 694.4h2.5v0.6h-2.5z M59 692.7h2.5v2.3h-2.5z M64 690.4h2.5v4.6h-2.5z M70 688.7h2.5v6.3h-2.5z M75 687.0h2.5v8.0h-2.5z M80 687.0h2.5v8.0h-2.5z M85 686.2h2.5v8.8h-2.5z M90 685.9h2.5v9.1h-2.5z M96 686.3h2.5v8.7h-2.5z M101 686.6h2.5v8.4h-2.5z M106 687.1h2.5v7.9h-2.5z M111 687.8h2.5v7.2h-2.5z M116 688.7h2.5v6.3h-2.5z M122 689.2h2.5v5.8h-2.5z M127 689.5h2.5v5.5h-2.5z M132 689.9h2.5v5.1h-2.5z M137 690.3h2.5v4.7h-2.5z M142 690.3h2.5v4.7h-2.5z M148 690.3h2.5v4.7h-2.5z M153 689.8h2.5v5.2h-2.5z M158 689.7h2.5v5.3h-2.5z M163 689.0h2.5v6.0h-2.5z M168 687.8h2.5v7.2h-2.5z M174 686.0h2.5v9.0h-2.5z M179 683.5h2.5v11.5h-2.5z M184 682.1h2.5v12.9h-2.5z M189 680.3h2.5v14.7h-2.5z M194 678.9h2.5v16.1h-2.5z M200 679.2h2.5v15.8h-2.5z M205 676.6h2.5v18.4h-2.5z M210 674.4h2.5v20.6h-2.5z M215 673.7h2.5v21.3h-2.5z M220 672.6h2.5v22.4h-2.5z M226 670.9h2.5v24.1h-2.5z M231 669.3h2.5v25.7h-2.5z M236 667.9h2.5v27.1h-2.5z M241 667.4h2.5v27.6h-2.5z M246 666.9h2.5v28.1h-2.5z M252 666.3h2.5v28.7h-2.5z M257 665.9h2.5v29.1h-2.5z M262 665.7h2.5v29.3h-2.5z M267 665.4h2.5v29.6h-2.5z M272 665.2h2.5v29.8h-2.5z M278 665.3h2.5v29.7h-2.5z M283 665.6h2.5v29.4h-2.5z M288 665.9h2.5v29.1h-2.5z M293 666.2h2.5v28.8h-2.5z M298 666.7h2.5v28.3h-2.5z M304 667.6h2.5v27.4h-2.5z M309 668.7h2.5v26.3h-2.5z M314 669.4h2.5v25.6h-2.5z M319 670.0h2.5v25.0h-2.5z M324 671.0h2.5v24.0h-2.5z M330 671.8h2.5v23.2h-2.5z M335 672.7h2.5v22.3h-2.5z M340 674.4h2.5v20.6h-2.5z M345 675.7h2.5v19.3h-2.5z M350 676.6h2.5v18.4h-2.5z M356 677.6h2.5v17.4h-2.5z M361 678.6h2.5v16.4h-2.5z M366 679.8h2.5v15.2h-2.5z M371 681.5h2.5v13.5h-2.5z M376 682.5h2.5v12.5h-2.5z M382 684.0h2.5v11.0h-2.5z M387 685.1h2.5v9.9h-2.5z M392 685.7h2.5v9.3h-2.5z M397 687.1h2.5v7.9h-2.5z M402 688.2h2.5v6.8h-2.5z M408 690.6h2.5v4.4h-2.5z M413 691.5h2.5v3.5h-2.5z M418 693.9h2.5v1.1h-2.5z M423 695.0h2.5v0.5h-2.5z M428 695.0h2.5v1.5h-2.5z M434 695.0h2.5v2.6h-2.5z M439 695.0h2.5v4.7h-2.5z M444 695.0h2.5v6.3h-2.5z M449 695.0h2.5v8.0h-2.5z M454 695.0h2.5v9.0h-2.5z M460 695.0h2.5v9.4h-2.5z M465 695.0h2.5v9.4h-2.5z M470 695.0h2.5v8.9h-2.5z M475 695.0h2.5v8.9h-2.5z M480 695.0h2.5v8.9h-2.5z M486 695.0h2.5v9.0h-2.5z M491 695.0h2.5v9.9h-2.5z M496 695.0h2.5v11.1h-2.5z M501 695.0h2.5v12.7h-2.5z M506 695.0h2.5v13.6h-2.5z M512 695.0h2.5v15.6h-2.5z M517 695.0h2.5v16.4h-2.5z M522 695.0h2.5v18.5h-2.5z M527 695.0h2.5v20.2h-2.5z M532 695.0h2.5v22.2h-2.5z M538 695.0h2.5v23.0h-2.5z M543 695.0h2.5v24.1h-2.5z M548 695.0h2.5v24.9h-2.5z M553 695.0h2.5v26.9h-2.5z M558 695.0h2.5v27.8h-2.5z M564 695.0h2.5v29.7h-2.5z M569 695.0h2.5v30.6h-2.5z M574 695.0h2.5v30.6h-2.5z M579 695.0h2.5v30.6h-2.5z M584 695.0h2.5v31.5h-2.5z M590 695.0h2.5v31.6h-2.5z M595 695.0h2.5v32.4h-2.5z M600 695.0h2.5v35.4h-2.5z M605 695.0h2.5v37.3h-2.5z M610 695.0h2.5v38.2h-2.5z M616 695.0h2.5v39.0h-2.5z M621 695.0h2.5v39.1h-2.5z M626 695.0h2.5v40.9h-2.5z M631 695.0h2.5v41.0h-2.5z M636 695.0h2.5v40.5h-2.5z M642 695.0h2.5v40.5h-2.5z M647 695.0h2.5v40.5h-2.5z M652 695.0h2.5v40.4h-2.5z M657 695.0h2.5v40.0h-2.5z M662 695.0h2.5v40.6h-2.5z M668 695.0h2.5v41.2h-2.5z M673 695.0h2.5v41.7h-2.5z M678 695.0h2.5v41.8h-2.5z M683 695.0h2.5v42.3h-2.5z M688 695.0h2.5v41.7h-2.5z M694 695.0h2.5v41.6h-2.5z M699 695.0h2.5v41.1h-2.5z M704 695.0h2.5v39.4h-2.5z M709 695.0h2.5v37.1h-2.5z M714 695.0h2.5v33.7h-2.5z M720 695.0h2.5v30.2h-2.5z M725 695.0h2.5v26.7h-2.5z M730 695.0h2.5v23.3h-2.5z M735 695.0h2.5v19.1h-2.5z M740 695.0h2.5v16.7h-2.5z M746 695.0h2.5v14.4h-2.5z M751 695.0h2.5v11.8h-2.5z M756 695.0h2.5v9.2h-2.5z M761 695.0h2.5v6.4h-2.5z M766 695.0h2.5v2.5h-2.5z M772 694.7h2.5v0.3h-2.5z M777 692.2h2.5v2.8h-2.5z M782 688.4h2.5v6.6h-2.5z M787 686.5h2.5v8.5h-2.5z M792 684.8h2.5v10.2h-2.5z M798 683.8h2.5v11.2h-2.5z M803 682.8h2.5v12.2h-2.5z M808 681.0h2.5v14.0h-2.5z M813 680.2h2.5v14.8h-2.5z M818 679.7h2.5v15.3h-2.5z M824 679.2h2.5v15.8h-2.5z M829 678.3h2.5v16.7h-2.5z M834 677.8h2.5v17.2h-2.5z M839 676.8h2.5v18.2h-2.5z M844 675.3h2.5v19.7h-2.5z M850 674.1h2.5v20.9h-2.5z M855 672.0h2.5v23.0h-2.5z M860 669.8h2.5v25.2h-2.5z M865 668.8h2.5v26.2h-2.5z M870 667.9h2.5v27.1h-2.5z M876 666.7h2.5v28.3h-2.5z M881 664.7h2.5v30.3h-2.5z M886 663.5h2.5v31.5h-2.5z M891 662.9h2.5v32.1h-2.5z M896 662.9h2.5v32.1h-2.5z M902 663.2h2.5v31.8h-2.5z M907 663.4h2.5v31.6h-2.5z M912 664.3h2.5v30.7h-2.5z M917 665.2h2.5v29.8h-2.5z M922 666.4h2.5v28.6h-2.5z M928 667.8h2.5v27.2h-2.5z M933 669.7h2.5v25.3h-2.5z M938 670.7h2.5v24.3h-2.5z M943 671.6h2.5v23.4h-2.5z M948 672.7h2.5v22.3h-2.5z M954 673.7h2.5v21.3h-2.5z M959 674.8h2.5v20.2h-2.5z M964 676.2h2.5v18.8h-2.5z M969 676.9h2.5v18.1h-2.5z M974 677.5h2.5v17.5h-2.5z M980 678.0h2.5v17.0h-2.5z M985 678.0h2.5v17.0h-2.5z M990 678.0h2.5v17.0h-2.5z M995 678.8h2.5v16.2h-2.5z M1000 680.9h2.5v14.1h-2.5z M1006 682.6h2.5v12.4h-2.5z M1011 684.4h2.5v10.6h-2.5z M1016 686.4h2.5v8.6h-2.5z M1021 688.4h2.5v6.6h-2.5z M1026 690.2h2.5v4.8h-2.5z M1032 692.3h2.5v2.7h-2.5z M1037 694.5h2.5v0.5h-2.5z M1042 695.0h2.5v0.9h-2.5z M1047 695.0h2.5v1.4h-2.5z M1052 695.0h2.5v2.0h-2.5z M1058 695.0h2.5v2.4h-2.5z M1063 695.0h2.5v1.9h-2.5z M1068 695.0h2.5v1.5h-2.5z M1073 695.0h2.5v0.7h-2.5z M1078 695.0h2.5v0.0h-2.5z M1084 694.5h2.5v0.5h-2.5z M1089 693.9h2.5v1.1h-2.5z M1094 693.0h2.5v2.0h-2.5z M1099 692.1h2.5v2.9h-2.5z M1104 691.3h2.5v3.7h-2.5z M1110 690.6h2.5v4.4h-2.5z M1115 690.5h2.5v4.5h-2.5z" fill="#dc7426"/>
<path d="M0 694.5H1177" stroke="#6a3a48" stroke-width="1.2" fill="none"/>
<rect x="28" y="8.2" width="127" height="14.6" fill="#fff"/>
<text x="28.5" y="19.5" font-size="11" fill="#202020" textLength="126" lengthAdjust="spacingAndGlyphs" text-anchor="start" font-family="Liberation Sans, sans-serif">Cndl; LCOc1; LAST TRADE</text>
<rect x="28" y="22.9" width="204.5" height="14.6" fill="#fff"/>
<text x="28.5" y="34.2" font-size="11" fill="#101010" textLength="203.5" lengthAdjust="spacingAndGlyphs" text-anchor="start" font-family="Liberation Sans, sans-serif">19.10.2012; 112,26; 113,08; 112,26; 112,92</text>
<rect x="28" y="37.4" width="180" height="14.6" fill="#fff"/>
<text x="28.5" y="48.7" font-size="11" fill="#3030a8" textLength="179" lengthAdjust="spacingAndGlyphs" text-anchor="start" font-family="Liberation Sans, sans-serif">SMA; LCOc1; LAST TRADE(Last);&#160; 50;</text>
<rect x="28" y="51.7" width="91" height="14.6" fill="#fff"/>
<text x="28.5" y="63.0" font-size="11" fill="#2c2ca0" textLength="90" lengthAdjust="spacingAndGlyphs" text-anchor="start" font-family="Liberation Sans, sans-serif">19.10.2012; 113,37</text>
<rect x="28" y="66.3" width="185" height="14.6" fill="#fff"/>
<text x="28.5" y="77.6" font-size="11" fill="#909090" textLength="184" lengthAdjust="spacingAndGlyphs" text-anchor="start" font-family="Liberation Sans, sans-serif">EMA; LCOc1; LAST TRADE(Last);&#160; 200;</text>
<rect x="28" y="80.7" width="91.6" height="14.6" fill="#fff"/>
<text x="28.5" y="92.0" font-size="11" fill="#909090" textLength="90.6" lengthAdjust="spacingAndGlyphs" text-anchor="start" font-family="Liberation Sans, sans-serif">19.10.2012; 110,70</text>
<text x="2" y="14.5" font-size="11" fill="#303080" textLength="16" lengthAdjust="spacingAndGlyphs" text-anchor="start" font-family="Liberation Sans, sans-serif">128</text>
<g><circle cx="24" cy="12" r="3.6" fill="#fff" stroke="#d02828" stroke-width="1"/><path d="M22.2 12H25.8 M24 10.2V13.8" stroke="#d02828" stroke-width="1"/><path d="M26.5 7.8A4.8 4.8 0 0 0 22 16.3" stroke="#222" stroke-width="1.1" fill="none"/></g>
<g><circle cx="24" cy="41" r="3.6" fill="#fff" stroke="#d02828" stroke-width="1"/><path d="M22.2 41H25.8 M24 39.2V42.8" stroke="#d02828" stroke-width="1"/><path d="M26.5 36.8A4.8 4.8 0 0 0 22 45.3" stroke="#222" stroke-width="1.1" fill="none"/></g>
<g><circle cx="24" cy="70" r="3.6" fill="#fff" stroke="#d02828" stroke-width="1"/><path d="M22.2 70H25.8 M24 68.2V71.8" stroke="#d02828" stroke-width="1"/><path d="M26.5 65.8A4.8 4.8 0 0 0 22 74.3" stroke="#222" stroke-width="1.1" fill="none"/></g>
<rect x="28" y="501" width="260" height="29" fill="#fff"/>
<text x="29" y="512.5" font-size="11" fill="#98508a" textLength="258" lengthAdjust="spacingAndGlyphs" text-anchor="start" font-family="Liberation Sans, sans-serif">RSI; LCOc1; LAST TRADE(Last);&#160; 14; Wilder Smoothing;</text>
<text x="29" y="526.5" font-size="11" fill="#98508a" textLength="90" lengthAdjust="spacingAndGlyphs" text-anchor="start" font-family="Liberation Sans, sans-serif">19.10.2012; 49,797</text>
<g><circle cx="24" cy="505" r="3.6" fill="#fff" stroke="#d02828" stroke-width="1"/><path d="M22.2 505H25.8 M24 503.2V506.8" stroke="#d02828" stroke-width="1"/><path d="M26.5 500.8A4.8 4.8 0 0 0 22 509.3" stroke="#222" stroke-width="1.1" fill="none"/></g>
<rect x="28" y="656" width="282" height="14" fill="#fff"/>
<rect x="28" y="670" width="106" height="15" fill="#fff"/>
<text x="29" y="667.5" font-size="11" fill="#302020" textLength="280" lengthAdjust="spacingAndGlyphs" text-anchor="start" font-family="Liberation Sans, sans-serif">MACD; LCOc1; LAST TRADE(Last);&#160; 12; 26; 9; Exponential;</text>
<text x="29" y="681.5" font-size="11" fill="#302020" textLength="104" lengthAdjust="spacingAndGlyphs" text-anchor="start" font-family="Liberation Sans, sans-serif">19.10.2012; 0,41; <tspan fill="#e8a050">0,40</tspan></text>
<g><circle cx="24" cy="660" r="3.6" fill="#fff" stroke="#d02828" stroke-width="1"/><path d="M22.2 660H25.8 M24 658.2V661.8" stroke="#d02828" stroke-width="1"/><path d="M26.5 655.8A4.8 4.8 0 0 0 22 664.3" stroke="#222" stroke-width="1.1" fill="none"/></g>
<rect x="0" y="338" width="29" height="14" fill="#fff"/>
<text x="-2" y="349.5" font-size="11" fill="#303080" textLength="26" lengthAdjust="spacingAndGlyphs" text-anchor="start" font-family="Liberation Sans, sans-serif">98,77</text>
<text x="499.8" y="465.5" font-size="11" fill="#303080" textLength="26" lengthAdjust="spacingAndGlyphs" text-anchor="start" font-family="Liberation Sans, sans-serif">88,49</text>
<text x="1182" y="22" font-size="11" fill="#222" textLength="22.5" lengthAdjust="spacingAndGlyphs" text-anchor="start" font-family="Liberation Sans, sans-serif">Price</text>
<text x="1182" y="38" font-size="11" fill="#222" textLength="20" lengthAdjust="spacingAndGlyphs" text-anchor="start" font-family="Liberation Sans, sans-serif">USD</text>
<text x="1184.5" y="477.91999999999996" font-size="11" fill="#222" textLength="11.5" lengthAdjust="spacingAndGlyphs" text-anchor="start" font-family="Liberation Sans, sans-serif">87</text>
<text x="1184.5" y="448.60999999999996" font-size="13" fill="#111" font-weight="bold" textLength="13.5" lengthAdjust="spacingAndGlyphs" text-anchor="start" font-family="Liberation Sans, sans-serif">90</text>
<text x="1184.5" y="414.29999999999995" font-size="11" fill="#222" textLength="11.5" lengthAdjust="spacingAndGlyphs" text-anchor="start" font-family="Liberation Sans, sans-serif">93</text>
<text x="1184.5" y="380.48999999999995" font-size="11" fill="#222" textLength="11.5" lengthAdjust="spacingAndGlyphs" text-anchor="start" font-family="Liberation Sans, sans-serif">96</text>
<text x="1184.5" y="346.68" font-size="11" fill="#222" textLength="11.5" lengthAdjust="spacingAndGlyphs" text-anchor="start" font-family="Liberation Sans, sans-serif">99</text>
<text x="1184.5" y="312.87" font-size="11" fill="#222" textLength="17" lengthAdjust="spacingAndGlyphs" text-anchor="start" font-family="Liberation Sans, sans-serif">102</text>
<text x="1184.5" y="279.06" font-size="11" fill="#222" textLength="17" lengthAdjust="spacingAndGlyphs" text-anchor="start" font-family="Liberation Sans, sans-serif">105</text>
<text x="1184.5" y="245.25" font-size="11" fill="#222" textLength="17" lengthAdjust="spacingAndGlyphs" text-anchor="start" font-family="Liberation Sans, sans-serif">108</text>
<text x="1184.5" y="211.44" font-size="11" fill="#222" textLength="17" lengthAdjust="spacingAndGlyphs" text-anchor="start" font-family="Liberation Sans, sans-serif">111</text>
<text x="1184.5" y="177.63" font-size="11" fill="#222" textLength="17" lengthAdjust="spacingAndGlyphs" text-anchor="start" font-family="Liberation Sans, sans-serif">114</text>
<text x="1184.5" y="143.82" font-size="11" fill="#222" textLength="17" lengthAdjust="spacingAndGlyphs" text-anchor="start" font-family="Liberation Sans, sans-serif">117</text>
<text x="1185.5" y="110.51" font-size="13" fill="#111" font-weight="bold" textLength="19.5" lengthAdjust="spacingAndGlyphs" text-anchor="start" font-family="Liberation Sans, sans-serif">120</text>
<text x="1184.5" y="76.2" font-size="11" fill="#222" textLength="17" lengthAdjust="spacingAndGlyphs" text-anchor="start" font-family="Liberation Sans, sans-serif">123</text>
<text x="1182" y="522" font-size="11" fill="#222" textLength="26" lengthAdjust="spacingAndGlyphs" text-anchor="start" font-family="Liberation Sans, sans-serif">Value</text>
<text x="1182" y="537.5" font-size="11" fill="#222" textLength="20" lengthAdjust="spacingAndGlyphs" text-anchor="start" font-family="Liberation Sans, sans-serif">USD</text>
<text x="1185" y="565.0" font-size="11" fill="#222" textLength="11.5" lengthAdjust="spacingAndGlyphs" text-anchor="start" font-family="Liberation Sans, sans-serif">60</text>
<text x="1185" y="595.0" font-size="11" fill="#222" textLength="11.5" lengthAdjust="spacingAndGlyphs" text-anchor="start" font-family="Liberation Sans, sans-serif">40</text>
<text x="1185" y="625.0" font-size="11" fill="#222" textLength="11.5" lengthAdjust="spacingAndGlyphs" text-anchor="start" font-family="Liberation Sans, sans-serif">20</text>
<text x="1182" y="678" font-size="11" fill="#222" textLength="26" lengthAdjust="spacingAndGlyphs" text-anchor="start" font-family="Liberation Sans, sans-serif">Value</text>
<text x="1182" y="694" font-size="11" fill="#222" textLength="20" lengthAdjust="spacingAndGlyphs" text-anchor="start" font-family="Liberation Sans, sans-serif">USD</text>
<text x="1185" y="719" font-size="11" fill="#222" textLength="11" lengthAdjust="spacingAndGlyphs" text-anchor="start" font-family="Liberation Sans, sans-serif">-2</text>
<path d="M1182.5 177L1186.5 181L1182.5 185L1178.5 181z" fill="#2020d0"/>
<path d="M1182.5 182L1186.5 186L1182.5 190L1178.5 186z" fill="#000"/>
<path d="M1182.5 206.8L1186.5 210.8L1182.5 214.8L1178.5 210.8z" fill="#909090"/>
<path d="M1182.5 572.5L1186.5 576.5L1182.5 580.5L1178.5 576.5z" fill="#902070"/>
<path d="M20.5 746V749 M40.5 746V749 M61.5 746V749 M87.5 746V749 M113.5 746V749 M139.5 746V749 M165.5 746V749 M191.5 746V749 M217.5 746V749 M243.5 746V749 M269.5 746V749 M295.5 746V749 M321.5 746V749 M347.5 746V749 M373.5 746V749 M394.5 746V749 M420.5 746V749 M446.5 746V749 M472.5 746V749 M498.5 746V749 M524.5 746V749 M550.5 746V749 M576.5 746V749 M602.5 746V749 M628.5 746V749 M654.5 746V749 M680.5 746V749 M706.5 746V749 M732.5 746V749 M758.5 746V749 M784.5 746V749 M810.5 746V749 M836.5 746V749 M862.5 746V749 M888.5 746V749 M914.5 746V749 M940.5 746V749 M966.5 746V749 M992.5 746V749 M1018.5 746V749 M1044.5 746V749 M1070.5 746V749 M1096.5 746V749 M1122.5 746V749 M1148.5 746V749 M1174.5 746V749" stroke="#333" stroke-width="1" fill="none"/>
<text x="20.5" y="760" font-size="11" fill="#333" textLength="11" lengthAdjust="spacingAndGlyphs" text-anchor="middle" font-family="Liberation Sans, sans-serif">27</text>
<text x="40.5" y="760" font-size="11" fill="#333" textLength="11" lengthAdjust="spacingAndGlyphs" text-anchor="middle" font-family="Liberation Sans, sans-serif">03</text>
<text x="61.5" y="760" font-size="11" fill="#333" textLength="11" lengthAdjust="spacingAndGlyphs" text-anchor="middle" font-family="Liberation Sans, sans-serif">09</text>
<text x="87.5" y="760" font-size="11" fill="#333" textLength="11" lengthAdjust="spacingAndGlyphs" text-anchor="middle" font-family="Liberation Sans, sans-serif">16</text>
<text x="113.5" y="760" font-size="11" fill="#333" textLength="11" lengthAdjust="spacingAndGlyphs" text-anchor="middle" font-family="Liberation Sans, sans-serif">23</text>
<text x="139.5" y="760" font-size="11" fill="#333" textLength="11" lengthAdjust="spacingAndGlyphs" text-anchor="middle" font-family="Liberation Sans, sans-serif">30</text>
<text x="165.5" y="760" font-size="11" fill="#333" textLength="11" lengthAdjust="spacingAndGlyphs" text-anchor="middle" font-family="Liberation Sans, sans-serif">06</text>
<text x="191.5" y="760" font-size="11" fill="#333" textLength="11" lengthAdjust="spacingAndGlyphs" text-anchor="middle" font-family="Liberation Sans, sans-serif">13</text>
<text x="217.5" y="760" font-size="11" fill="#333" textLength="11" lengthAdjust="spacingAndGlyphs" text-anchor="middle" font-family="Liberation Sans, sans-serif">20</text>
<text x="243.5" y="760" font-size="11" fill="#333" textLength="11" lengthAdjust="spacingAndGlyphs" text-anchor="middle" font-family="Liberation Sans, sans-serif">27</text>
<text x="269.5" y="760" font-size="11" fill="#333" textLength="11" lengthAdjust="spacingAndGlyphs" text-anchor="middle" font-family="Liberation Sans, sans-serif">05</text>
<text x="295.5" y="760" font-size="11" fill="#333" textLength="11" lengthAdjust="spacingAndGlyphs" text-anchor="middle" font-family="Liberation Sans, sans-serif">12</text>
<text x="321.5" y="760" font-size="11" fill="#333" textLength="11" lengthAdjust="spacingAndGlyphs" text-anchor="middle" font-family="Liberation Sans, sans-serif">19</text>
<text x="347.5" y="760" font-size="11" fill="#333" textLength="11" lengthAdjust="spacingAndGlyphs" text-anchor="middle" font-family="Liberation Sans, sans-serif">26</text>
<text x="373.5" y="760" font-size="11" fill="#333" textLength="11" lengthAdjust="spacingAndGlyphs" text-anchor="middle" font-family="Liberation Sans, sans-serif">02</text>
<text x="394.5" y="760" font-size="11" fill="#333" textLength="11" lengthAdjust="spacingAndGlyphs" text-anchor="middle" font-family="Liberation Sans, sans-serif">09</text>
<text x="420.5" y="760" font-size="11" fill="#333" textLength="11" lengthAdjust="spacingAndGlyphs" text-anchor="middle" font-family="Liberation Sans, sans-serif">16</text>
<text x="446.5" y="760" font-size="11" fill="#333" textLength="11" lengthAdjust="spacingAndGlyphs" text-anchor="middle" font-family="Liberation Sans, sans-serif">23</text>
<text x="472.5" y="760" font-size="11" fill="#333" textLength="11" lengthAdjust="spacingAndGlyphs" text-anchor="middle" font-family="Liberation Sans, sans-serif">30</text>
<text x="498.5" y="760" font-size="11" fill="#333" textLength="11" lengthAdjust="spacingAndGlyphs" text-anchor="middle" font-family="Liberation Sans, sans-serif">07</text>
<text x="524.5" y="760" font-size="11" fill="#333" textLength="11" lengthAdjust="spacingAndGlyphs" text-anchor="middle" font-family="Liberation Sans, sans-serif">14</text>
<text x="550.5" y="760" font-size="11" fill="#333" textLength="11" lengthAdjust="spacingAndGlyphs" text-anchor="middle" font-family="Liberation Sans, sans-serif">21</text>
<text x="576.5" y="760" font-size="11" fill="#333" textLength="11" lengthAdjust="spacingAndGlyphs" text-anchor="middle" font-family="Liberation Sans, sans-serif">28</text>
<text x="602.5" y="760" font-size="11" fill="#333" textLength="11" lengthAdjust="spacingAndGlyphs" text-anchor="middle" font-family="Liberation Sans, sans-serif">04</text>
<text x="628.5" y="760" font-size="11" fill="#333" textLength="11" lengthAdjust="spacingAndGlyphs" text-anchor="middle" font-family="Liberation Sans, sans-serif">11</text>
<text x="654.5" y="760" font-size="11" fill="#333" textLength="11" lengthAdjust="spacingAndGlyphs" text-anchor="middle" font-family="Liberation Sans, sans-serif">18</text>
<text x="680.5" y="760" font-size="11" fill="#333" textLength="11" lengthAdjust="spacingAndGlyphs" text-anchor="middle" font-family="Liberation Sans, sans-serif">25</text>
<text x="706.5" y="760" font-size="11" fill="#333" textLength="11" lengthAdjust="spacingAndGlyphs" text-anchor="middle" font-family="Liberation Sans, sans-serif">02</text>
<text x="732.5" y="760" font-size="11" fill="#333" textLength="11" lengthAdjust="spacingAndGlyphs" text-anchor="middle" font-family="Liberation Sans, sans-serif">09</text>
<text x="758.5" y="760" font-size="11" fill="#333" textLength="11" lengthAdjust="spacingAndGlyphs" text-anchor="middle" font-family="Liberation Sans, sans-serif">16</text>
<text x="784.5" y="760" font-size="11" fill="#333" textLength="11" lengthAdjust="spacingAndGlyphs" text-anchor="middle" font-family="Liberation Sans, sans-serif">23</text>
<text x="810.5" y="760" font-size="11" fill="#333" textLength="11" lengthAdjust="spacingAndGlyphs" text-anchor="middle" font-family="Liberation Sans, sans-serif">30</text>
<text x="836.5" y="760" font-size="11" fill="#333" textLength="11" lengthAdjust="spacingAndGlyphs" text-anchor="middle" font-family="Liberation Sans, sans-serif">06</text>
<text x="862.5" y="760" font-size="11" fill="#333" textLength="11" lengthAdjust="spacingAndGlyphs" text-anchor="middle" font-family="Liberation Sans, sans-serif">13</text>
<text x="888.5" y="760" font-size="11" fill="#333" textLength="11" lengthAdjust="spacingAndGlyphs" text-anchor="middle" font-family="Liberation Sans, sans-serif">20</text>
<text x="914.5" y="760" font-size="11" fill="#333" textLength="11" lengthAdjust="spacingAndGlyphs" text-anchor="middle" font-family="Liberation Sans, sans-serif">27</text>
<text x="940.5" y="760" font-size="11" fill="#333" textLength="11" lengthAdjust="spacingAndGlyphs" text-anchor="middle" font-family="Liberation Sans, sans-serif">03</text>
<text x="966.5" y="760" font-size="11" fill="#333" textLength="11" lengthAdjust="spacingAndGlyphs" text-anchor="middle" font-family="Liberation Sans, sans-serif">10</text>
<text x="992.5" y="760" font-size="11" fill="#333" textLength="11" lengthAdjust="spacingAndGlyphs" text-anchor="middle" font-family="Liberation Sans, sans-serif">17</text>
<text x="1018.5" y="760" font-size="11" fill="#333" textLength="11" lengthAdjust="spacingAndGlyphs" text-anchor="middle" font-family="Liberation Sans, sans-serif">24</text>
<text x="1044.5" y="760" font-size="11" fill="#333" textLength="11" lengthAdjust="spacingAndGlyphs" text-anchor="middle" font-family="Liberation Sans, sans-serif">01</text>
<text x="1070.5" y="760" font-size="11" fill="#333" textLength="11" lengthAdjust="spacingAndGlyphs" text-anchor="middle" font-family="Liberation Sans, sans-serif">08</text>
<text x="1096.5" y="760" font-size="11" fill="#333" textLength="11" lengthAdjust="spacingAndGlyphs" text-anchor="middle" font-family="Liberation Sans, sans-serif">15</text>
<text x="1122.5" y="760" font-size="11" fill="#333" textLength="11" lengthAdjust="spacingAndGlyphs" text-anchor="middle" font-family="Liberation Sans, sans-serif">22</text>
<text x="1148.5" y="760" font-size="11" fill="#333" textLength="11" lengthAdjust="spacingAndGlyphs" text-anchor="middle" font-family="Liberation Sans, sans-serif">29</text>
<path d="M41.5 764V778 M149.5 764V778 M259.5 764V778 M373.5 764V778 M477.5 764V778 M597.5 764V778 M706.5 764V778 M821.5 764V778 M940.5 764V778 M1044.5 764V778 M1163.5 764V778" stroke="#222" stroke-width="1.3" fill="none"/>
<text x="0" y="776" font-size="14" fill="#111" font-weight="bold" textLength="37.5" lengthAdjust="spacingAndGlyphs" text-anchor="start" font-family="Liberation Sans, sans-serif">дек 11</text>
<text x="94.9" y="776" font-size="14" fill="#111" font-weight="bold" textLength="39.4" lengthAdjust="spacingAndGlyphs" text-anchor="middle" font-family="Liberation Sans, sans-serif">янв 12</text>
<text x="204" y="776" font-size="14" fill="#111" font-weight="bold" textLength="43.1" lengthAdjust="spacingAndGlyphs" text-anchor="middle" font-family="Liberation Sans, sans-serif">фев 12</text>
<text x="316.1" y="776" font-size="14" fill="#111" font-weight="bold" textLength="40.2" lengthAdjust="spacingAndGlyphs" text-anchor="middle" font-family="Liberation Sans, sans-serif">мар 12</text>
<text x="424.2" y="776" font-size="14" fill="#111" font-weight="bold" textLength="39.4" lengthAdjust="spacingAndGlyphs" text-anchor="middle" font-family="Liberation Sans, sans-serif">апр 12</text>
<text x="536.3" y="776" font-size="14" fill="#111" font-weight="bold" textLength="40.5" lengthAdjust="spacingAndGlyphs" text-anchor="middle" font-family="Liberation Sans, sans-serif">май 12</text>
<text x="651" y="776" font-size="14" fill="#111" font-weight="bold" textLength="42.4" lengthAdjust="spacingAndGlyphs" text-anchor="middle" font-family="Liberation Sans, sans-serif">июн 12</text>
<text x="762.8" y="776" font-size="14" fill="#111" font-weight="bold" textLength="42.1" lengthAdjust="spacingAndGlyphs" text-anchor="middle" font-family="Liberation Sans, sans-serif">июл 12</text>
<text x="880.6" y="776" font-size="14" fill="#111" font-weight="bold" textLength="36.6" lengthAdjust="spacingAndGlyphs" text-anchor="middle" font-family="Liberation Sans, sans-serif">авг 12</text>
<text x="991.8" y="776" font-size="14" fill="#111" font-weight="bold" textLength="38.4" lengthAdjust="spacingAndGlyphs" text-anchor="middle" font-family="Liberation Sans, sans-serif">сен 12</text>
<text x="1103.7" y="776" font-size="14" fill="#111" font-weight="bold" textLength="36.5" lengthAdjust="spacingAndGlyphs" text-anchor="middle" font-family="Liberation Sans, sans-serif">окт 12</text>
<rect x="0" y="783" width="1217" height="28" fill="#404040"/>
<text x="11" y="802" font-size="13" fill="#d4d4d4" textLength="248" lengthAdjust="spacingAndGlyphs" text-anchor="start" font-family="Liberation Sans, sans-serif">Элитный Трейдер, ELITETRADER.RU</text>
<defs><linearGradient id="ga" x1="0" y1="0" x2="0" y2="1"><stop offset="0" stop-color="#b8e070"/><stop offset="1" stop-color="#3c9a20"/></linearGradient><linearGradient id="go" x1="0" y1="0" x2="0" y2="1"><stop offset="0" stop-color="#f8b040"/><stop offset="1" stop-color="#c83c10"/></linearGradient><linearGradient id="gc" x1="0" y1="0" x2="1" y2="1"><stop offset="0" stop-color="#a8d040"/><stop offset="0.45" stop-color="#f0a020"/><stop offset="1" stop-color="#e05020"/></linearGradient></defs>
<path d="M1102 787.3L1110 795.8H1106.5V804.2H1100.3V795.8H1094.6z" fill="url(#ga)"/>
<rect x="1092.4" y="798.6" width="9" height="5.6" fill="url(#go)"/>
<text x="1113.8" y="801.5" font-size="15" fill="#ffffff" font-weight="bold" textLength="22.5" lengthAdjust="spacingAndGlyphs" text-anchor="start" font-family="Liberation Sans, sans-serif">clip</text>
<circle cx="1144.2" cy="796.3" r="7.8" fill="url(#gc)"/>
<text x="1144.2" y="801.3" font-size="14" fill="#ffffff" font-weight="bold" text-anchor="middle" font-family="Liberation Sans, sans-serif">2</text>
<text x="1150.9" y="801.5" font-size="15" fill="#ffffff" font-weight="bold" textLength="22" lengthAdjust="spacingAndGlyphs" text-anchor="start" font-family="Liberation Sans, sans-serif">net</text>
<text x="1174" y="801.5" font-size="15" fill="#a0a0a0" font-weight="bold" textLength="33.8" lengthAdjust="spacingAndGlyphs" text-anchor="start" font-family="Liberation Sans, sans-serif">.com</text></svg></body></html>
